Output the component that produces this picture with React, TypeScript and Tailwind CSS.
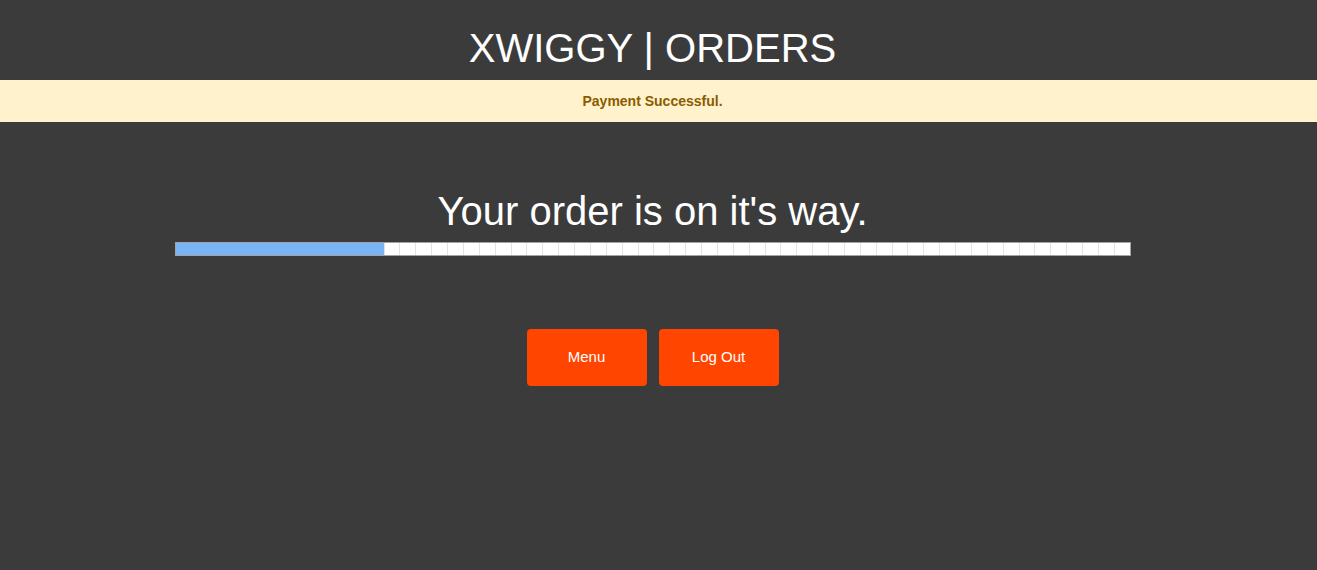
const TOTAL_CELLS = 60
const DONE_CELLS = 13

function ProgressTrack() {
  const rest = Array.from({ length: TOTAL_CELLS - DONE_CELLS })
  return (
    <div className="mx-auto flex h-[14px] w-[956px] border border-[#a3a3a3] bg-white">
      <div className="h-full w-[208px] shrink-0 bg-[#79b5f6]" />
      {rest.map((_, i) => (
        <div key={i} className="h-full flex-1 border-l border-[#e3e3e3]" />
      ))}
    </div>
  )
}

export default function App() {
  return (
    <div className="min-h-[570px] bg-[#3b3b3b] font-['Liberation_Sans',Arial,sans-serif] text-white">
      <header className="flex h-[80px] items-center justify-center pt-[16px] pr-[12px]">
        <h1 className="text-[40px] leading-none">XWIGGY | ORDERS</h1>
      </header>
      <div className="flex h-[42px] items-center justify-center bg-[#fff2cc] pr-[12px] text-[14px] font-bold text-[#8a5c00]">
        Payment Successful.
      </div>
      <main className="pt-[66px] pr-[12px]">
        <h2 className="text-center text-[40px] leading-[46px]">Your order is on it's way.</h2>
        <div className="mt-[8px]">
          <ProgressTrack />
        </div>
        <div className="mt-[73px] flex justify-center gap-[12px]">
          <button className="h-[57px] w-[120px] rounded-[4px] bg-[#ff4500] text-[15px] text-white">
            Menu
          </button>
          <button className="h-[57px] w-[120px] rounded-[4px] bg-[#ff4500] text-[15px] text-white">
            Log Out
          </button>
        </div>
      </main>
    </div>
  )
}
